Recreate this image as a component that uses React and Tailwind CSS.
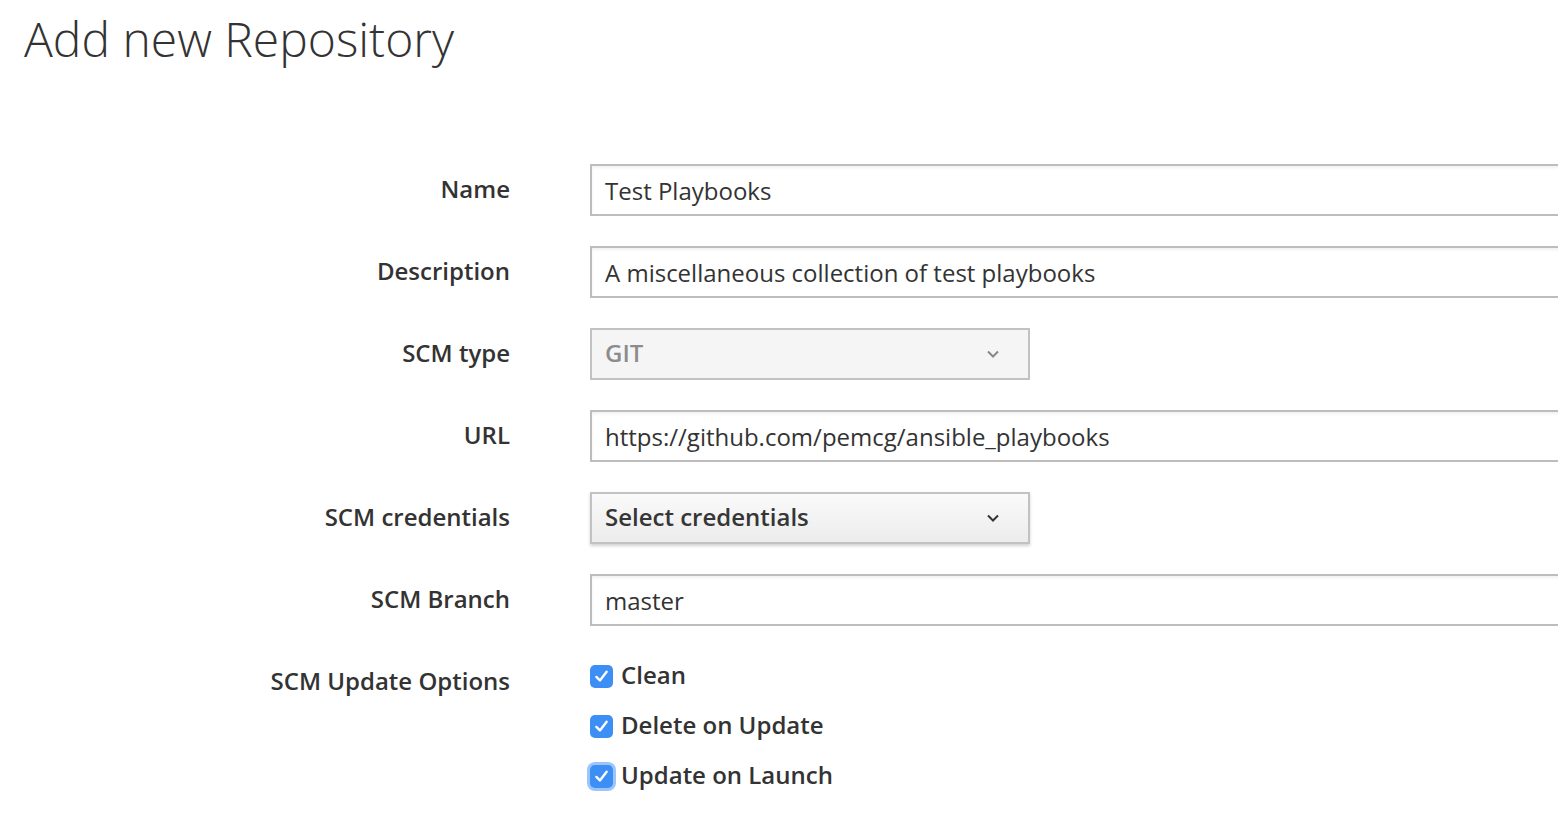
import React from 'react';

const font = { fontFamily: '"Open Sans", "Noto Sans", sans-serif' };

const Chevron = ({ className }) => (
  <svg viewBox="0 0 14 10" className={className} fill="none" stroke="currentColor" strokeWidth="2">
    <path d="M2 2.5 L7 7.5 L12 2.5" />
  </svg>
);

const Check = () => (
  <svg viewBox="0 0 24 24" className="w-[19px] h-[19px]" fill="none" stroke="white" strokeWidth="3" strokeLinecap="round" strokeLinejoin="round">
    <path d="M5.5 12.5 L10 17 L18.5 6" />
  </svg>
);

const Row = ({ label, children }) => (
  <div className="flex items-center h-[52px] mb-[30px]">
    <div className="w-[510px] shrink-0 text-right font-semibold text-[24px] text-[#333] -mt-[2px]">{label}</div>
    <div className="ml-[80px] flex-1">{children}</div>
  </div>
);

const TextInput = ({ value }) => (
  <div className="w-[1000px] h-[52px] border-2 border-[#bdbdbd] bg-white shadow-[inset_0_2px_3px_rgba(0,0,0,0.06)] flex items-center px-[13px] text-[24px] text-[#333]">
    <span className="mt-[1px]">{value}</span>
  </div>
);

const SelectBox = ({ value, disabled }) => (
  <div
    className={`w-[440px] h-[52px] border-2 border-[#c2c2c2] flex items-center justify-between pl-[13px] pr-[28px] text-[24px] font-semibold ${
      disabled
        ? 'bg-[#f5f5f5] text-[#8c8c8c]'
        : 'bg-gradient-to-b from-[#fafafa] to-[#ececec] text-[#363636] shadow-[0_2px_3px_rgba(0,0,0,0.18)]'
    }`}
  >
    <span className="-mt-[2px]">{value}</span>
    <Chevron className={`w-[14px] h-[10px] ${disabled ? 'text-[#888]' : 'text-[#333]'}`} />
  </div>
);

const CheckItem = ({ label, focused }) => (
  <div className="flex items-center h-[50px]">
    <div
      className={`w-[23px] h-[23px] rounded-[5px] bg-[#3d8ff5] flex items-center justify-center ${
        focused ? 'ring-[3px] ring-[#9cc6fa]' : ''
      }`}
    >
      <Check />
    </div>
    <span className="ml-[8px] font-semibold text-[24px] text-[#333] -mt-[3px]">{label}</span>
  </div>
);

export default function App() {
  return (
    <div className="w-[1558px] h-[816px] overflow-hidden bg-white" style={font}>
      <h1 className="pl-[24px] pt-[7px] text-[48px] font-light text-[#333] leading-[64px]">Add new Repository</h1>
      <div className="mt-[93px]">
        <Row label="Name"><TextInput value="Test Playbooks" /></Row>
        <Row label="Description"><TextInput value="A miscellaneous collection of test playbooks" /></Row>
        <Row label="SCM type"><SelectBox value="GIT" disabled /></Row>
        <Row label="URL"><TextInput value="https://github.com/pemcg/ansible_playbooks" /></Row>
        <Row label="SCM credentials"><SelectBox value="Select credentials" /></Row>
        <Row label="SCM Branch"><TextInput value="master" /></Row>
        <div className="flex -mt-[5px]">
          <div className="w-[510px] shrink-0 text-right font-semibold text-[24px] text-[#333] leading-[50px] pt-[5px]">SCM Update Options</div>
          <div className="ml-[80px] flex flex-col">
            <CheckItem label="Clean" />
            <CheckItem label="Delete on Update" />
            <CheckItem label="Update on Launch" focused />
          </div>
        </div>
      </div>
    </div>
  );
}
